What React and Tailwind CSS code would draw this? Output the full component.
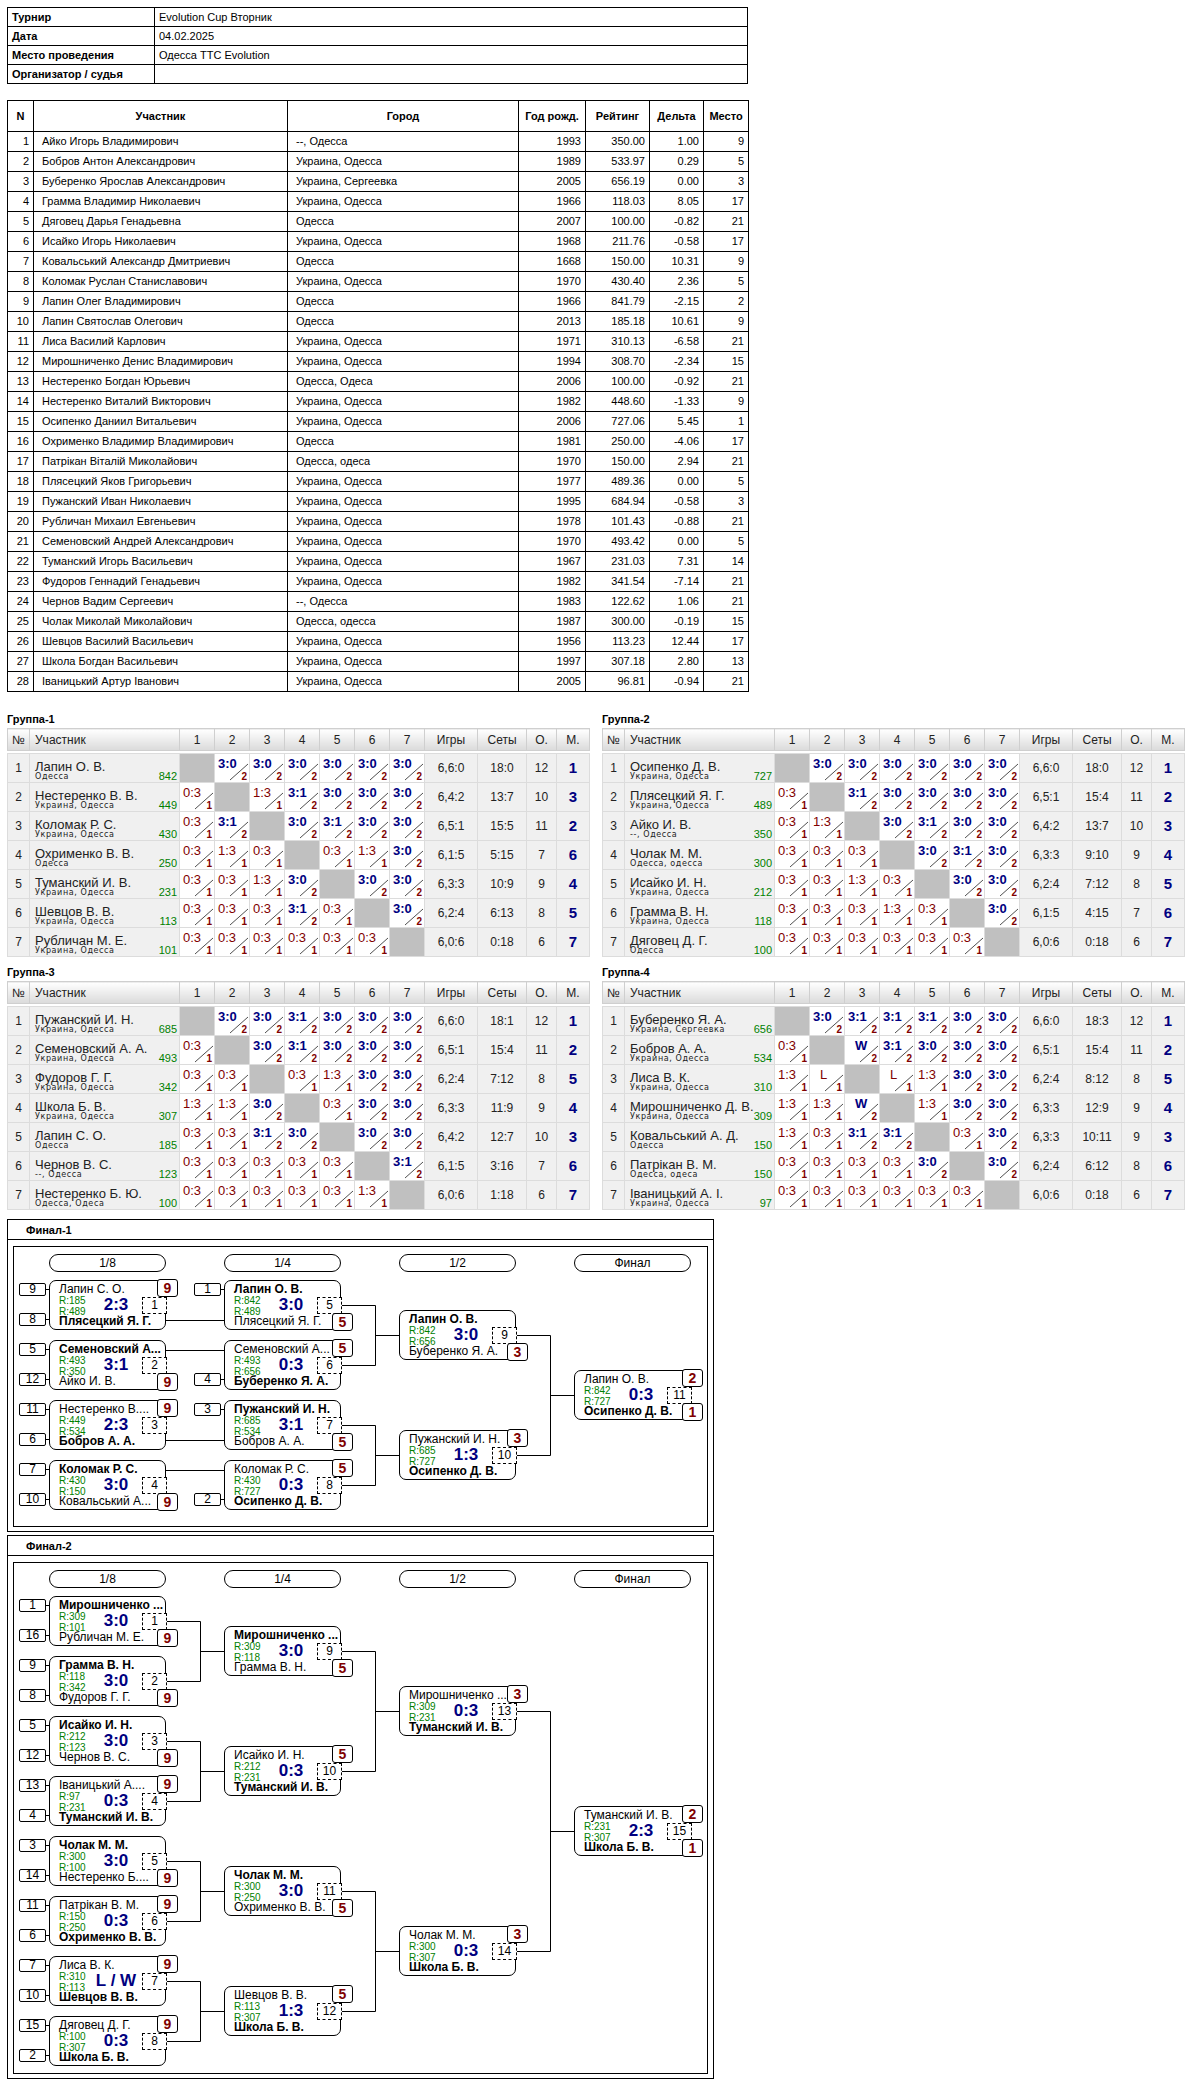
import React from "react";

const F = { fontFamily: '"Liberation Sans", Arial, sans-serif' };

const info = [
  ["Турнир", "Evolution Cup Вторник"],
  ["Дата", "04.02.2025"],
  ["Место проведения", "Одесса TTC Evolution"],
  ["Организатор / судья", ""],
];

const players = [
  ["Айко Игорь Владимирович", "--, Одесса", 1993, "350.00", "1.00", 9],
  ["Бобров Антон Александрович", "Украина, Одесса", 1989, "533.97", "0.29", 5],
  ["Буберенко Ярослав Александрович", "Украина, Сергеевка", 2005, "656.19", "0.00", 3],
  ["Грамма Владимир Николаевич", "Украина, Одесса", 1966, "118.03", "8.05", 17],
  ["Дяговец Дарья Генадьевна", "Одесса", 2007, "100.00", "-0.82", 21],
  ["Исайко Игорь Николаевич", "Украина, Одесса", 1968, "211.76", "-0.58", 17],
  ["Ковальський Александр Дмитриевич", "Одесса", 1668, "150.00", "10.31", 9],
  ["Коломак Руслан Станиславович", "Украина, Одесса", 1970, "430.40", "2.36", 5],
  ["Лапин Олег Владимирович", "Одесса", 1966, "841.79", "-2.15", 2],
  ["Лапин Святослав Олегович", "Одесса", 2013, "185.18", "10.61", 9],
  ["Лиса Василий Карлович", "Украина, Одесса", 1971, "310.13", "-6.58", 21],
  ["Мирошниченко Денис Владимирович", "Украина, Одесса", 1994, "308.70", "-2.34", 15],
  ["Нестеренко Богдан Юрьевич", "Одесса, Одеса", 2006, "100.00", "-0.92", 21],
  ["Нестеренко Виталий Викторович", "Украина, Одесса", 1982, "448.60", "-1.33", 9],
  ["Осипенко Даниил Витальевич", "Украина, Одесса", 2006, "727.06", "5.45", 1],
  ["Охрименко Владимир Владимирович", "Одесса", 1981, "250.00", "-4.06", 17],
  ["Патрікан Віталій Миколайович", "Одесса, одеса", 1970, "150.00", "2.94", 21],
  ["Плясецкий Яков Григорьевич", "Украина, Одесса", 1977, "489.36", "0.00", 5],
  ["Пужанский Иван Николаевич", "Украина, Одесса", 1995, "684.94", "-0.58", 3],
  ["Рубличан Михаил Евгеньевич", "Украина, Одесса", 1978, "101.43", "-0.88", 21],
  ["Семеновский Андрей Александрович", "Украина, Одесса", 1970, "493.42", "0.00", 5],
  ["Туманский Игорь Васильевич", "Украина, Одесса", 1967, "231.03", "7.31", 14],
  ["Фудоров Геннадий Генадьевич", "Украина, Одесса", 1982, "341.54", "-7.14", 21],
  ["Чернов Вадим Сергеевич", "--, Одесса", 1983, "122.62", "1.06", 21],
  ["Чолак Миколай Миколайович", "Одесса, одесса", 1987, "300.00", "-0.19", 15],
  ["Шевцов Василий Васильевич", "Украина, Одесса", 1956, "113.23", "12.44", 17],
  ["Школа Богдан Васильевич", "Украина, Одесса", 1997, "307.18", "2.80", 13],
  ["Іваницький Артур Іванович", "Украина, Одесса", 2005, "96.81", "-0.94", 21],
];

const L6 = ["0:3", "0:3", "0:3", "0:3", "0:3", "0:3", "x"];
const groups = [
  ["Группа-1", [
    ["Лапин О. В.", "Одесса", 842, ["x", "3:0", "3:0", "3:0", "3:0", "3:0", "3:0"], "6,6:0", "18:0", 12, 1],
    ["Нестеренко В. В.", "Украина, Одесса", 449, ["0:3", "x", "1:3", "3:1", "3:0", "3:0", "3:0"], "6,4:2", "13:7", 10, 3],
    ["Коломак Р. С.", "Украина, Одесса", 430, ["0:3", "3:1", "x", "3:0", "3:1", "3:0", "3:0"], "6,5:1", "15:5", 11, 2],
    ["Охрименко В. В.", "Одесса", 250, ["0:3", "1:3", "0:3", "x", "0:3", "1:3", "3:0"], "6,1:5", "5:15", 7, 6],
    ["Туманский И. В.", "Украина, Одесса", 231, ["0:3", "0:3", "1:3", "3:0", "x", "3:0", "3:0"], "6,3:3", "10:9", 9, 4],
    ["Шевцов В. В.", "Украина, Одесса", 113, ["0:3", "0:3", "0:3", "3:1", "0:3", "x", "3:0"], "6,2:4", "6:13", 8, 5],
    ["Рубличан М. Е.", "Украина, Одесса", 101, L6, "6,0:6", "0:18", 6, 7],
  ]],
  ["Группа-2", [
    ["Осипенко Д. В.", "Украина, Одесса", 727, ["x", "3:0", "3:0", "3:0", "3:0", "3:0", "3:0"], "6,6:0", "18:0", 12, 1],
    ["Плясецкий Я. Г.", "Украина, Одесса", 489, ["0:3", "x", "3:1", "3:0", "3:0", "3:0", "3:0"], "6,5:1", "15:4", 11, 2],
    ["Айко И. В.", "--, Одесса", 350, ["0:3", "1:3", "x", "3:0", "3:1", "3:0", "3:0"], "6,4:2", "13:7", 10, 3],
    ["Чолак М. М.", "Одесса, одесса", 300, ["0:3", "0:3", "0:3", "x", "3:0", "3:1", "3:0"], "6,3:3", "9:10", 9, 4],
    ["Исайко И. Н.", "Украина, Одесса", 212, ["0:3", "0:3", "1:3", "0:3", "x", "3:0", "3:0"], "6,2:4", "7:12", 8, 5],
    ["Грамма В. Н.", "Украина, Одесса", 118, ["0:3", "0:3", "0:3", "1:3", "0:3", "x", "3:0"], "6,1:5", "4:15", 7, 6],
    ["Дяговец Д. Г.", "Одесса", 100, L6, "6,0:6", "0:18", 6, 7],
  ]],
  ["Группа-3", [
    ["Пужанский И. Н.", "Украина, Одесса", 685, ["x", "3:0", "3:0", "3:1", "3:0", "3:0", "3:0"], "6,6:0", "18:1", 12, 1],
    ["Семеновский А. А.", "Украина, Одесса", 493, ["0:3", "x", "3:0", "3:1", "3:0", "3:0", "3:0"], "6,5:1", "15:4", 11, 2],
    ["Фудоров Г. Г.", "Украина, Одесса", 342, ["0:3", "0:3", "x", "0:3", "1:3", "3:0", "3:0"], "6,2:4", "7:12", 8, 5],
    ["Школа Б. В.", "Украина, Одесса", 307, ["1:3", "1:3", "3:0", "x", "0:3", "3:0", "3:0"], "6,3:3", "11:9", 9, 4],
    ["Лапин С. О.", "Одесса", 185, ["0:3", "0:3", "3:1", "3:0", "x", "3:0", "3:0"], "6,4:2", "12:7", 10, 3],
    ["Чернов В. С.", "--, Одесса", 123, ["0:3", "0:3", "0:3", "0:3", "0:3", "x", "3:1"], "6,1:5", "3:16", 7, 6],
    ["Нестеренко Б. Ю.", "Одесса, Одеса", 100, ["0:3", "0:3", "0:3", "0:3", "0:3", "1:3", "x"], "6,0:6", "1:18", 6, 7],
  ]],
  ["Группа-4", [
    ["Буберенко Я. А.", "Украина, Сергеевка", 656, ["x", "3:0", "3:1", "3:1", "3:1", "3:0", "3:0"], "6,6:0", "18:3", 12, 1],
    ["Бобров А. А.", "Украина, Одесса", 534, ["0:3", "x", "W", "3:1", "3:0", "3:0", "3:0"], "6,5:1", "15:4", 11, 2],
    ["Лиса В. К.", "Украина, Одесса", 310, ["1:3", "L", "x", "L", "1:3", "3:0", "3:0"], "6,2:4", "8:12", 8, 5],
    ["Мирошниченко Д. В.", "Украина, Одесса", 309, ["1:3", "1:3", "W", "x", "1:3", "3:0", "3:0"], "6,3:3", "12:9", 9, 4],
    ["Ковальський А. Д.", "Одесса", 150, ["1:3", "0:3", "3:1", "3:1", "x", "0:3", "3:0"], "6,3:3", "10:11", 9, 3],
    ["Патрікан В. М.", "Одесса, одеса", 150, ["0:3", "0:3", "0:3", "0:3", "3:0", "x", "3:0"], "6,2:4", "6:12", 8, 6],
    ["Іваницький А. І.", "Украина, Одесса", 97, L6, "6,0:6", "0:18", 6, 7],
  ]],
];

function ScoreCell({ v }) {
  if (v === "x") return <td className="bg-[#c0c0c0] border border-[#dcdcdc] p-0" />;
  const win = v === "W" || (v !== "L" && +v[0] > +v[2]);
  const letter = v === "W" || v === "L";
  return (
    <td className="relative bg-white border border-[#dcdcdc] p-0">
      <span className={`absolute top-[2px] text-[13px] leading-[15px] ${letter ? "left-[10px]" : "left-[3px]"} ${win ? "font-bold text-[#000080]" : "text-[#800000]"}`}>{v}</span>
      <svg className="absolute left-0 top-0" width="35" height="28">
        <line x1="15" y1="26" x2="33" y2="10" stroke="#222" strokeWidth="0.8" />
      </svg>
      <span className="absolute right-[2px] bottom-[0px] text-[10px] leading-[11px] font-bold text-[#800000]">{win ? 2 : 1}</span>
    </td>
  );
}

function Group({ title, rows }) {
  const th = "border border-[#cfcfcf] font-normal text-[12px] text-[#222] bg-gradient-to-b from-white to-[#dadada] h-[22px] p-0";
  return (
    <div className="w-[582px]">
      <div className="font-bold text-[11px] h-[14px] leading-[14px] mb-[2px]">{title}</div>
      <table className="border-collapse table-fixed w-[582px]">
        <colgroup>
          <col className="w-[22px]" />
          <col className="w-[150px]" />
          {[1, 2, 3, 4, 5, 6, 7].map((i) => <col key={i} className="w-[35px]" />)}
          <col className="w-[53px]" />
          <col className="w-[49px]" />
          <col className="w-[30px]" />
          <col className="w-[33px]" />
        </colgroup>
        <thead>
          <tr>
            <th className={th}>№</th>
            <th className={`${th} text-left pl-[5px]`}>Участник</th>
            {[1, 2, 3, 4, 5, 6, 7].map((i) => <th key={i} className={th}>{i}</th>)}
            <th className={th}>Игры</th>
            <th className={th}>Сеты</th>
            <th className={th}>О.</th>
            <th className={th}>М.</th>
          </tr>
          <tr><td colSpan={13} className="h-[3px] p-0" /></tr>
        </thead>
        <tbody>
          {rows.map((r, i) => (
            <tr key={i} className="h-[29px] text-[12px] text-[#222]">
              <td className="bg-[#f0f0f0] border border-[#dcdcdc] text-center p-0">{i + 1}</td>
              <td className="bg-[#f0f0f0] border border-[#dcdcdc] p-0 pl-[5px] relative">
                <div className="text-[13px] leading-[15px] -mt-[4px]">{r[0]}</div>
                <div className="absolute left-[5px] bottom-[0px] text-[8px] leading-[10px] tracking-[0.6px]" style={{ fontFamily: '"DejaVu Sans", sans-serif' }}>{r[1]}</div>
                <div className="absolute right-[2px] bottom-[0px] text-[11px] leading-[12px] text-[#008000]">{r[2]}</div>
              </td>
              {r[3].map((v, j) => <ScoreCell key={j} v={v} />)}
              <td className="bg-[#f0f0f0] border border-[#dcdcdc] text-center p-0">{r[4]}</td>
              <td className="bg-[#f0f0f0] border border-[#dcdcdc] text-center p-0">{r[5]}</td>
              <td className="bg-[#f0f0f0] border border-[#dcdcdc] text-center p-0">{r[6]}</td>
              <td className="bg-[#f0f0f0] border border-[#dcdcdc] text-center p-0 font-bold text-[15px] text-[#000080]">{r[7]}</td>
            </tr>
          ))}
        </tbody>
      </table>
    </div>
  );
}

const COLX = [35, 210, 385, 560];

function Match({ c, y, a, b, ra, rb, s, n, win, badge, badge2 }) {
  const x = COLX[c];
  return (
    <div className="absolute w-[117px] h-[50px] border border-black rounded-[7px] bg-white" style={{ left: x, top: y }}>
      <div className={`absolute left-[9px] top-[1px] text-[12px] leading-[14px] whitespace-nowrap ${win === "a" ? "font-bold" : ""}`}>{a}</div>
      <div className="absolute left-[9px] top-[14px] text-[10px] leading-[11px] text-[#008000]">R:{ra}</div>
      <div className="absolute left-[9px] top-[25px] text-[10px] leading-[11px] text-[#008000]">R:{rb}</div>
      <div className={`absolute left-[9px] top-[33px] text-[12px] leading-[14px] whitespace-nowrap ${win === "b" ? "font-bold" : ""}`}>{b}</div>
      <div className="absolute left-[40px] w-[52px] top-[15px] text-center text-[17px] leading-[18px] font-bold text-[#000080] whitespace-nowrap">{s}</div>
      <div className="absolute left-[92px] top-[16px] w-[25px] h-[17px] border border-dashed border-black bg-white text-[12px] leading-[15px] text-center">{n}</div>
      {badge && (
        <div className={`absolute left-[107px] w-[21px] h-[18px] border border-black rounded-[3px] bg-white text-center text-[14px] leading-[16px] font-bold text-[#800000] ${badge[0] === "t" ? "top-[-2px]" : "top-[32px]"}`}>{badge[1]}</div>
      )}
      {badge2 && (
        <div className="absolute left-[107px] w-[21px] h-[18px] border border-black rounded-[3px] bg-white text-center text-[14px] leading-[16px] font-bold text-[#800000] top-[32px]">{badge2}</div>
      )}
    </div>
  );
}

function Seed({ x, y, n }) {
  return (
    <div className="absolute flex items-center" style={{ left: x, top: y }}>
      <div className="w-[27px] h-[13px] border border-black rounded-[2px] bg-white text-[12px] leading-[11px] text-center">{n}</div>
      <div className="w-[3px] h-px bg-black" />
    </div>
  );
}

function Pills() {
  return ["1/8", "1/4", "1/2", "Финал"].map((t, i) => (
    <div key={t} className="absolute top-[7px] w-[117px] h-[18px] border border-black rounded-[9px] text-[12px] leading-[16px] text-center bg-white" style={{ left: COLX[i] }}>{t}</div>
  ));
}

function Lines({ h, segs }) {
  return (
    <svg className="absolute left-0 top-0" width="695" height={h}>
      {segs.map((p, i) => (
        <polyline key={i} points={p} fill="none" stroke="black" strokeWidth="1" />
      ))}
    </svg>
  );
}

const J = (x1, xm, x3, y1, y2) => [
  `${x1},${y1 + 0.5} ${xm + 0.5},${y1 + 0.5} ${xm + 0.5},${y2 + 0.5} ${x1},${y2 + 0.5}`,
  `${xm},${(y1 + y2) / 2 + 0.5} ${x3},${(y1 + y2) / 2 + 0.5}`,
];

function Final1() {
  const segs = [
    `152,73.5 210,73.5`, `152,103.5 210,103.5`, `152,193.5 210,193.5`, `152,223.5 210,223.5`,
    ...J(327, 361, 385, 58, 118), ...J(327, 361, 385, 178, 238),
    ...J(502, 536, 560, 88, 208),
  ];
  return (
    <div className="relative w-[695px] h-[281px] border border-black bg-white">
      <Lines h={281} segs={segs} />
      <Pills />
      <Seed x={5} y={36} n={9} /><Seed x={5} y={66} n={8} />
      <Seed x={5} y={96} n={5} /><Seed x={5} y={126} n={12} />
      <Seed x={5} y={156} n={11} /><Seed x={5} y={186} n={6} />
      <Seed x={5} y={216} n={7} /><Seed x={5} y={246} n={10} />
      <Seed x={180} y={36} n={1} /><Seed x={180} y={126} n={4} />
      <Seed x={180} y={156} n={3} /><Seed x={180} y={246} n={2} />
      <Match c={0} y={33} a="Лапин С. О." b="Плясецкий Я. Г." ra={185} rb={489} s="2:3" n={1} win="b" badge={["t", 9]} />
      <Match c={0} y={93} a="Семеновский А..." b="Айко И. В." ra={493} rb={350} s="3:1" n={2} win="a" badge={["b", 9]} />
      <Match c={0} y={153} a="Нестеренко В...." b="Бобров А. А." ra={449} rb={534} s="2:3" n={3} win="b" badge={["t", 9]} />
      <Match c={0} y={213} a="Коломак Р. С." b="Ковальський А..." ra={430} rb={150} s="3:0" n={4} win="a" badge={["b", 9]} />
      <Match c={1} y={33} a="Лапин О. В." b="Плясецкий Я. Г." ra={842} rb={489} s="3:0" n={5} win="a" badge={["b", 5]} />
      <Match c={1} y={93} a="Семеновский А..." b="Буберенко Я. А." ra={493} rb={656} s="0:3" n={6} win="b" badge={["t", 5]} />
      <Match c={1} y={153} a="Пужанский И. Н." b="Бобров А. А." ra={685} rb={534} s="3:1" n={7} win="a" badge={["b", 5]} />
      <Match c={1} y={213} a="Коломак Р. С." b="Осипенко Д. В." ra={430} rb={727} s="0:3" n={8} win="b" badge={["t", 5]} />
      <Match c={2} y={63} a="Лапин О. В." b="Буберенко Я. А." ra={842} rb={656} s="3:0" n={9} win="a" badge={["b", 3]} />
      <Match c={2} y={183} a="Пужанский И. Н." b="Осипенко Д. В." ra={685} rb={727} s="1:3" n={10} win="b" badge={["t", 3]} />
      <Match c={3} y={123} a="Лапин О. В." b="Осипенко Д. В." ra={842} rb={727} s="0:3" n={11} win="b" badge={["t", 2]} badge2={1} />
    </div>
  );
}

const f2r8 = [
  [1, 16, "Мирошниченко ...", "Рубличан М. Е.", 309, 101, "3:0", "a", "b"],
  [9, 8, "Грамма В. Н.", "Фудоров Г. Г.", 118, 342, "3:0", "a", "b"],
  [5, 12, "Исайко И. Н.", "Чернов В. С.", 212, 123, "3:0", "a", "b"],
  [13, 4, "Іваницький А....", "Туманский И. В.", 97, 231, "0:3", "b", "t"],
  [3, 14, "Чолак М. М.", "Нестеренко Б....", 300, 100, "3:0", "a", "b"],
  [11, 6, "Патрікан В. М.", "Охрименко В. В.", 150, 250, "0:3", "b", "t"],
  [7, 10, "Лиса В. К.", "Шевцов В. В.", 310, 113, "L / W", "b", "t"],
  [15, 2, "Дяговец Д. Г.", "Школа Б. В.", 100, 307, "0:3", "b", "t"],
];

function Final2() {
  const segs = [];
  for (let k = 0; k < 4; k++) segs.push(...J(152, 186, 210, 58 + 120 * k, 118 + 120 * k));
  for (let k = 0; k < 2; k++) segs.push(...J(327, 361, 385, 88 + 240 * k, 208 + 240 * k));
  segs.push(...J(502, 536, 560, 148, 388));
  return (
    <div className="relative w-[695px] h-[512px] border border-black bg-white">
      <Lines h={512} segs={segs} />
      <Pills />
      {f2r8.map((m, k) => (
        <React.Fragment key={k}>
          <Seed x={5} y={36 + 60 * k} n={m[0]} />
          <Seed x={5} y={66 + 60 * k} n={m[1]} />
          <Match c={0} y={33 + 60 * k} a={m[2]} b={m[3]} ra={m[4]} rb={m[5]} s={m[6]} n={k + 1} win={m[7]} badge={[m[8], 9]} />
        </React.Fragment>
      ))}
      <Match c={1} y={63} a="Мирошниченко ..." b="Грамма В. Н." ra={309} rb={118} s="3:0" n={9} win="a" badge={["b", 5]} />
      <Match c={1} y={183} a="Исайко И. Н." b="Туманский И. В." ra={212} rb={231} s="0:3" n={10} win="b" badge={["t", 5]} />
      <Match c={1} y={303} a="Чолак М. М." b="Охрименко В. В." ra={300} rb={250} s="3:0" n={11} win="a" badge={["b", 5]} />
      <Match c={1} y={423} a="Шевцов В. В." b="Школа Б. В." ra={113} rb={307} s="1:3" n={12} win="b" badge={["t", 5]} />
      <Match c={2} y={123} a="Мирошниченко ..." b="Туманский И. В." ra={309} rb={231} s="0:3" n={13} win="b" badge={["t", 3]} />
      <Match c={2} y={363} a="Чолак М. М." b="Школа Б. В." ra={300} rb={307} s="0:3" n={14} win="b" badge={["t", 3]} />
      <Match c={3} y={243} a="Туманский И. В." b="Школа Б. В." ra={231} rb={307} s="2:3" n={15} win="b" badge={["t", 2]} badge2={1} />
    </div>
  );
}

function FinalBox({ title, children }) {
  return (
    <div className="w-[707px] border border-black bg-white">
      <div className="h-[20px] border-b border-black pl-[18px] text-[11px] font-bold leading-[20px]">{title}</div>
      <div className="pl-[5px] pt-[6px] pb-[4px]">{children}</div>
    </div>
  );
}

export default function App() {
  const cell = "border border-black px-[4px] h-[20px] p-0";
  return (
    <div className="bg-white w-[1186px] min-h-[2088px] pt-[7px] pl-[7px] text-black" style={F}>
      <table className="border-collapse w-[741px] text-[11px]">
        <tbody>
          {info.map(([a, b]) => (
            <tr key={a} className="h-[19px]">
              <td className="border border-black w-[147px] px-[4px] font-bold">{a}</td>
              <td className="border border-black px-[4px]">{b}</td>
            </tr>
          ))}
        </tbody>
      </table>
      <table className="border-collapse w-[741px] text-[11px] mt-[16px] table-fixed">
        <colgroup>
          <col className="w-[26px]" /><col className="w-[254px]" /><col className="w-[231px]" />
          <col className="w-[67px]" /><col className="w-[64px]" /><col className="w-[54px]" /><col className="w-[45px]" />
        </colgroup>
        <thead>
          <tr className="h-[31px] font-bold">
            {["N", "Участник", "Город", "Год рожд.", "Рейтинг", "Дельта", "Место"].map((h) => (
              <th key={h} className="border border-black text-center p-0">{h}</th>
            ))}
          </tr>
        </thead>
        <tbody>
          {players.map((p, i) => (
            <tr key={i} className="h-[20px]">
              <td className={`${cell} text-right`}>{i + 1}</td>
              <td className={`${cell} pl-[8px]`}>{p[0]}</td>
              <td className={`${cell} pl-[8px]`}>{p[1]}</td>
              <td className={`${cell} text-right`}>{p[2]}</td>
              <td className={`${cell} text-right`}>{p[3]}</td>
              <td className={`${cell} text-right`}>{p[4]}</td>
              <td className={`${cell} text-right`}>{p[5]}</td>
            </tr>
          ))}
        </tbody>
      </table>
      <div className="grid grid-cols-[582px_582px] gap-x-[13px] gap-y-[8px] mt-[20px]">
        {groups.map(([t, r]) => <Group key={t} title={t} rows={r} />)}
      </div>
      <div className="flex flex-col gap-[3px] mt-[9px]">
        <FinalBox title="Финал-1"><Final1 /></FinalBox>
        <FinalBox title="Финал-2"><Final2 /></FinalBox>
      </div>
    </div>
  );
}
